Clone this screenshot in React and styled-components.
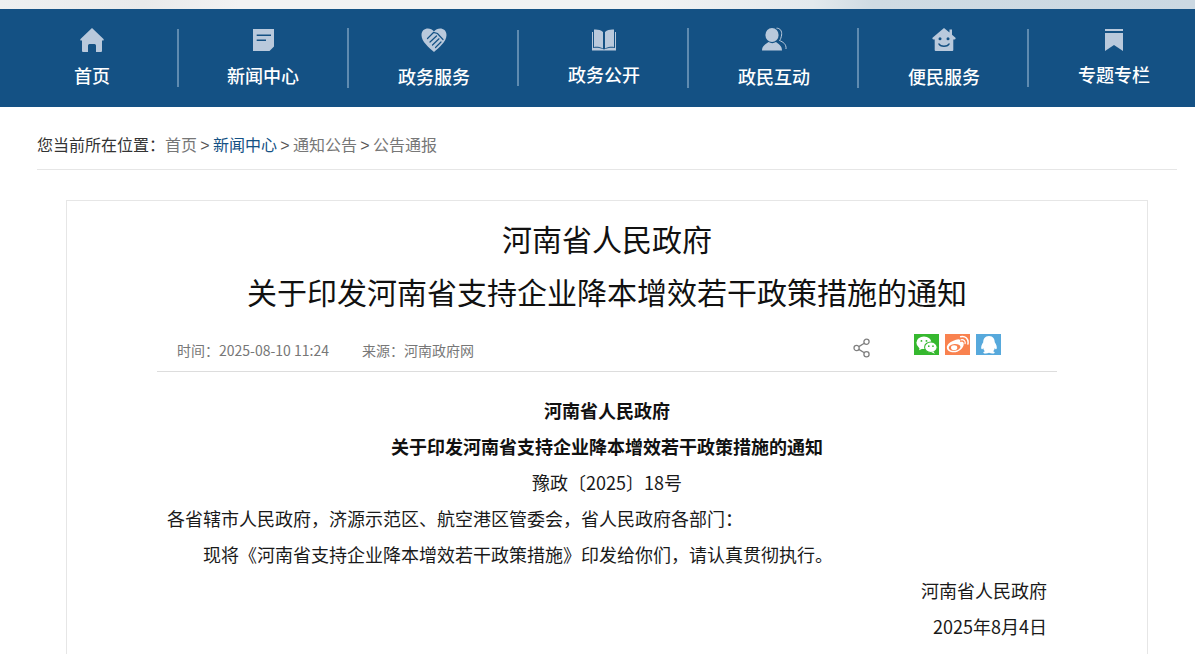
import React from 'react'
import styled, { createGlobalStyle } from 'styled-components'

const GlobalStyle = createGlobalStyle`
  html, body {
    margin: 0;
    padding: 0;
    height: 654px;
    overflow: hidden;
    background: #ffffff;
  }
  body {
    font-family: "Noto Sans CJK SC", "Noto Sans", sans-serif;
    color: #222222;
  }
`

const TopStrip = styled.div`
  height: 9px;
  background: linear-gradient(90deg, #eef0f1 0%, #e9eaeb 12%, #f2f2f3 20%, #f0f2f3 55%, #e3e9ed 68%, #cfdbe3 73%, #cbd8e2 100%);
`

const NavBar = styled.nav`
  display: flex;
  height: 98px;
  padding-left: 7px;
  background: #145184;
  overflow: hidden;
`

const NavItem = styled.a`
  flex: 0 0 ${p => p.$width || 168}px;
  display: flex;
  flex-direction: column;
  align-items: center;
  padding-top: 18px;
  padding-left: ${p => p.$inset || 0}px;
  color: #ffffff;
  box-sizing: border-box;
`

const IconBox = styled.span`
  display: block;
  height: 26px;
  color: #b9c9dc;
  svg { display: block; }
`

const NavLabel = styled.span`
  margin-top: ${p => p.$gap}px;
  font-size: 18px;
  line-height: 26px;
  font-weight: 500;
  white-space: nowrap;
`

const NavRule = styled.span`
  flex: 0 0 2px;
  background: #5f8bb0;
  margin-top: ${p => p.$top}px;
  height: ${p => p.$height}px;
`

const Crumbs = styled.div`
  margin: 0 18px 0 37px;
  height: 63px;
  padding-top: 24px;
  box-sizing: border-box;
  border-bottom: 1px solid #e6e6e6;
  font-size: 16px;
  line-height: 26px;
  color: #333333;
  white-space: nowrap;
`

const CrumbLink = styled.a`
  color: ${p => (p.$active ? '#145184' : '#777777')};
`

const CrumbSep = styled.span`
  margin: 0 3.3px;
  color: #555555;
  font-family: "Liberation Sans", sans-serif;
`

const Card = styled.article`
  width: 1082px;
  box-sizing: border-box;
  margin: 30px 0 0 66px;
  border: 1px solid #e6e6e6;
  border-bottom: 0;
  padding: 11px 90px 0;
  height: 460px;
`

const Title = styled.h1`
  margin: 0;
  text-align: center;
  font-size: 30px;
  line-height: 53px;
  font-weight: 400;
  color: #111111;
`

const MetaBar = styled.div`
  display: flex;
  align-items: flex-start;
  height: 42px;
  margin-top: 12px;
  padding-left: 20px;
  box-sizing: border-box;
  border-bottom: 1px solid #dddddd;
  font-size: 14px;
  color: #777777;
`

const MetaText = styled.span`
  margin-right: 33px;
  padding-top: 8px;
  line-height: 24px;
  white-space: nowrap;
`

const ShareBox = styled.div`
  margin-left: auto;
  display: flex;
  align-items: flex-start;
  padding: 4px 56px 0 0;
`

const ShareIcon = styled.span`
  display: block;
  margin: 4px 43px 0 0;
  color: #808080;
  svg { display: block; }
`

const SocialBadge = styled.span`
  display: flex;
  align-items: center;
  justify-content: center;
  width: 25px;
  height: 21px;
  margin-left: ${p => (p.$gap ? '6px' : 0)};
  background: ${p => p.$color};
  svg { display: block; }
`

const Body = styled.div`
  padding: 20px 10px 0;
  font-size: 18px;
  line-height: 36px;
  color: #1a1a1a;
`

const Heading = styled.p`
  margin: 0;
  text-align: center;
  font-weight: 700;
  color: #111111;
`

const CenterLine = styled.p`
  margin: 0;
  text-align: center;
`

const Para = styled.p`
  margin: 0;
  text-indent: ${p => (p.$indent ? '36px' : 0)};
`

const RightLine = styled.p`
  margin: 0;
  text-align: right;
`

const HomeIcon = () => (
  <svg width="26" height="26" viewBox="0 0 26 26" fill="currentColor">
    <path d="M13 1 L24.5 12 Q25.5 13.5 24 13.5 L23 13.5 L23 24 Q23 25 22 25 L17 25 L17 18.5 Q17 17 15.5 17 L10.5 17 Q9 17 9 18.5 L9 25 L4 25 Q3 25 3 24 L3 13.5 L2 13.5 Q.5 13.5 1.5 12 Z" />
  </svg>
)

const NewsIcon = () => (
  <svg width="26" height="26" viewBox="0 0 26 26" fill="currentColor">
    <path fillRule="evenodd" d="M3 2 H24 V19.5 L19.5 24 H3 Z M6.7 7.5 V9 H21 V7.5 Z M6.7 12.5 V14 H16 V12.5 Z" />
  </svg>
)

const HeartIcon = () => (
  <svg width="26" height="26" viewBox="0 0 26 26">
    <path fill="currentColor" d="M13 4.5 C9.5 -.2 .5 .4 .5 8.2 C.5 14.5 8 20.5 13 25 C18 20.5 25.5 14.5 25.5 8.2 C25.5 .4 16.5 -.2 13 4.5 Z" />
    <g stroke="#145184" strokeWidth="1.2" fill="none" strokeLinecap="round">
      <path d="M6.5 11.5 L12.5 5.5 L16.5 6.5 L22 12.5" />
      <path d="M9 15 L15.5 9 M11.5 18 L18 11.8 M14.5 20.5 L20 15" />
    </g>
  </svg>
)

const BookIcon = () => (
  <svg width="28" height="26" viewBox="0 0 28 26" fill="currentColor">
    <path d="M13 5 C10.5 2.8 7 2.2 4 2.6 V20 C7 19.5 10.5 20 13 21.6 Z" />
    <path d="M15 5 C17.5 2.8 21 2.2 24 2.6 V20 C21 19.5 17.5 20 15 21.6 Z" />
    <path d="M2 5 H3 V21 C7 20.6 11 21 14 22.6 C17 21 21 20.6 25 21 V5 H26 V23.4 H2 Z" />
  </svg>
)

const PersonIcon = () => (
  <svg width="26" height="26" viewBox="0 0 26 26" fill="currentColor">
    <ellipse cx="11" cy="8" rx="6.6" ry="7" />
    <path d="M1 23.5 C1 18.5 5 17 7.5 15 C10 16.5 12.5 16.5 15 15 C17.5 17 21 18.5 21 23.5 Z" />
    <path d="M15.5 1.2 C19 1 21.2 4 20.6 8 C20.2 10.5 19.5 12.5 18.5 13.5 C22 15 25.5 17 25 22" fill="none" stroke="currentColor" strokeWidth="1" />
  </svg>
)

const SmileIcon = () => (
  <svg width="26" height="26" viewBox="0 0 26 26" fill="currentColor">
    <path fillRule="evenodd" d="M13 1 L18.5 5.5 V2.5 H21 V7.7 L24.5 10.8 Q25.2 12.6 23.5 12.6 H22.3 V23 Q22.3 24 21.3 24 H4.7 Q3.7 24 3.7 23 V12.6 H2.5 Q.8 12.6 1.5 10.8 Z M7 16.5 C8 21.2 18 21.2 19 16.5 L17.4 16.5 C16.4 19 9.6 19 8.6 16.5 Z" />
    <circle cx="9" cy="11.7" r="1.5" fill="#145184" />
    <circle cx="17" cy="11.7" r="1.5" fill="#145184" />
  </svg>
)

const BookmarkIcon = () => (
  <svg width="26" height="26" viewBox="0 0 26 26" fill="currentColor">
    <rect x="4" y="2" width="18" height="2" />
    <path d="M4 6 H22 V24 L13 18 L4 24 Z" />
  </svg>
)

const ShareGlyph = () => (
  <svg width="18" height="20" viewBox="0 0 18 20" fill="none" stroke="currentColor" strokeWidth="1.3">
    <circle cx="13.5" cy="3.8" r="2.6" />
    <circle cx="3.6" cy="10" r="2.6" />
    <circle cx="13.5" cy="16.2" r="2.6" />
    <path d="M5.8 8.6 L11.3 5.2 M5.8 11.4 L11.3 14.8" />
  </svg>
)

const WechatGlyph = () => (
  <svg width="22" height="18" viewBox="0 0 21 17" fill="#ffffff">
    <ellipse cx="7.6" cy="6.4" rx="7.2" ry="6" />
    <path d="M3.5 10 L3 13.5 L7 11.5 Z" />
    <ellipse cx="14.2" cy="10.6" rx="6" ry="5" stroke="#36b82f" strokeWidth="1" />
    <path d="M16.5 14.5 L18 16.8 L14.5 15.3 Z" />
    <circle cx="5.2" cy="4.6" r=".9" fill="#36b82f" />
    <circle cx="10" cy="4.6" r=".9" fill="#36b82f" />
    <circle cx="12.2" cy="9.6" r=".8" fill="#36b82f" />
    <circle cx="16.2" cy="9.6" r=".8" fill="#36b82f" />
  </svg>
)

const WeiboGlyph = () => (
  <svg width="24" height="19" viewBox="0 0 23 18" fill="#ffffff">
    <path fillRule="evenodd" d="M9.5 4.5 C11.5 3.6 13 3.8 13.5 4.8 C13.8 5.5 13.6 6.2 13.4 6.8 C15 6.2 17 6.3 17 8.2 C17 12.5 12 16.5 7.5 16.5 C3.5 16.5 .8 14.5 .8 11.8 C.8 9 4.5 6 9.5 4.5 Z M8 8.5 C4.8 8.8 2.5 10.6 2.7 12.5 C2.9 14.3 5.5 15.3 8.6 15 C11.7 14.7 14 12.9 13.8 11 C13.6 9.2 11 8.2 8 8.5 Z" />
    <ellipse cx="7.8" cy="12" rx="3" ry="2.2" />
    <path d="M14 1.5 C18.5 .3 22 4 21 8.5" fill="none" stroke="#ffffff" strokeWidth="1.4" strokeLinecap="round" />
    <path d="M14.5 4.5 C17 4 19 6 18.3 8.2" fill="none" stroke="#ffffff" strokeWidth="1.2" strokeLinecap="round" />
  </svg>
)

const QqGlyph = () => (
  <svg width="20" height="20" viewBox="0 0 18 18" fill="#ffffff">
    <path d="M9 .8 C12.8 .8 14.2 3.6 14.2 6.6 C15.6 8.6 16.5 11 15.8 12.6 C15.2 13 14.6 12.4 14.2 11.6 C14 13 13.4 14 12.6 14.6 C13.8 15 14.4 15.6 14 16.2 C13 17 10.5 16.8 9 16 C7.5 16.8 5 17 4 16.2 C3.6 15.6 4.2 15 5.4 14.6 C4.6 14 4 13 3.8 11.6 C3.4 12.4 2.8 13 2.2 12.6 C1.5 11 2.4 8.6 3.8 6.6 C3.8 3.6 5.2 .8 9 .8 Z" />
  </svg>
)

const navItems = [
  { label: '首页', icon: <HomeIcon />, gap: 9, rule: [20, 58], width: 170 },
  { label: '新闻中心', icon: <NewsIcon />, gap: 9, rule: [19, 60] },
  { label: '政务服务', icon: <HeartIcon />, gap: 10, rule: [21, 56], inset: 2 },
  { label: '政务公开', icon: <BookIcon />, gap: 8, rule: [19, 60], inset: 2 },
  { label: '政民互动', icon: <PersonIcon />, gap: 10, rule: [19, 60], inset: 2 },
  { label: '便民服务', icon: <SmileIcon />, gap: 10, rule: [20, 58], inset: 2 },
  { label: '专题专栏', icon: <BookmarkIcon />, gap: 8, inset: 2 },
]

export default function App() {
  return (
    <>
      <GlobalStyle />
      <TopStrip />
      <NavBar>
        {navItems.map(item => (
          <React.Fragment key={item.label}>
            <NavItem $width={item.width} $inset={item.inset}>
              <IconBox>{item.icon}</IconBox>
              <NavLabel $gap={item.gap}>{item.label}</NavLabel>
            </NavItem>
            {item.rule && <NavRule $top={item.rule[0]} $height={item.rule[1]} />}
          </React.Fragment>
        ))}
      </NavBar>
      <Crumbs>
        您当前所在位置：
        <CrumbLink>首页</CrumbLink>
        <CrumbSep>&gt;</CrumbSep>
        <CrumbLink $active>新闻中心</CrumbLink>
        <CrumbSep>&gt;</CrumbSep>
        <CrumbLink>通知公告</CrumbLink>
        <CrumbSep>&gt;</CrumbSep>
        <CrumbLink>公告通报</CrumbLink>
      </Crumbs>
      <Card>
        <Title>
          河南省人民政府
          <br />
          关于印发河南省支持企业降本增效若干政策措施的通知
        </Title>
        <MetaBar>
          <MetaText>时间：2025-08-10 11:24</MetaText>
          <MetaText>来源：河南政府网</MetaText>
          <ShareBox>
            <ShareIcon><ShareGlyph /></ShareIcon>
            <SocialBadge $color="#36b82f"><WechatGlyph /></SocialBadge>
            <SocialBadge $color="#f9824f" $gap><WeiboGlyph /></SocialBadge>
            <SocialBadge $color="#57a9dc" $gap><QqGlyph /></SocialBadge>
          </ShareBox>
        </MetaBar>
        <Body>
          <Heading>河南省人民政府</Heading>
          <Heading>关于印发河南省支持企业降本增效若干政策措施的通知</Heading>
          <CenterLine>豫政〔2025〕18号</CenterLine>
          <Para>各省辖市人民政府，济源示范区、航空港区管委会，省人民政府各部门：</Para>
          <Para $indent>现将《河南省支持企业降本增效若干政策措施》印发给你们，请认真贯彻执行。</Para>
          <RightLine>河南省人民政府</RightLine>
          <RightLine>2025年8月4日</RightLine>
        </Body>
      </Card>
    </>
  )
}
